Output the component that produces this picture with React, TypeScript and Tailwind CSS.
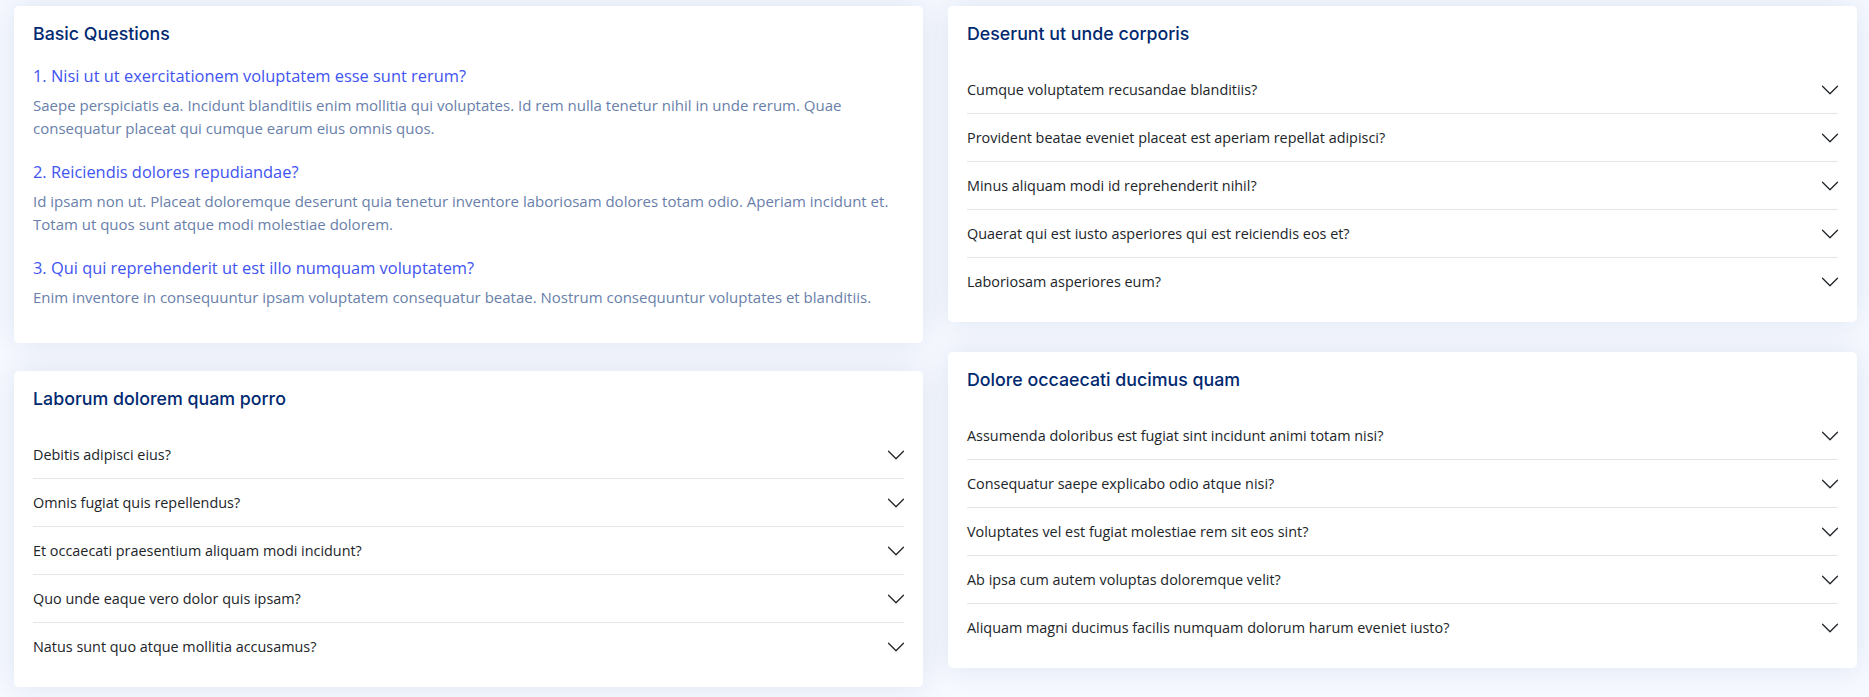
const basicQuestions = [
  {
    q: "1. Nisi ut ut exercitationem voluptatem esse sunt rerum?",
    a: "Saepe perspiciatis ea. Incidunt blanditiis enim mollitia qui voluptates. Id rem nulla tenetur nihil in unde rerum. Quae consequatur placeat qui cumque earum eius omnis quos.",
  },
  {
    q: "2. Reiciendis dolores repudiandae?",
    a: "Id ipsam non ut. Placeat doloremque deserunt quia tenetur inventore laboriosam dolores totam odio. Aperiam incidunt et. Totam ut quos sunt atque modi molestiae dolorem.",
  },
  {
    q: "3. Qui qui reprehenderit ut est illo numquam voluptatem?",
    a: "Enim inventore in consequuntur ipsam voluptatem consequatur beatae. Nostrum consequuntur voluptates et blanditiis.",
  },
];

const groups = {
  laborum: {
    title: "Laborum dolorem quam porro",
    items: [
      "Debitis adipisci eius?",
      "Omnis fugiat quis repellendus?",
      "Et occaecati praesentium aliquam modi incidunt?",
      "Quo unde eaque vero dolor quis ipsam?",
      "Natus sunt quo atque mollitia accusamus?",
    ],
  },
  deserunt: {
    title: "Deserunt ut unde corporis",
    items: [
      "Cumque voluptatem recusandae blanditiis?",
      "Provident beatae eveniet placeat est aperiam repellat adipisci?",
      "Minus aliquam modi id reprehenderit nihil?",
      "Quaerat qui est iusto asperiores qui est reiciendis eos et?",
      "Laboriosam asperiores eum?",
    ],
  },
  dolore: {
    title: "Dolore occaecati ducimus quam",
    items: [
      "Assumenda doloribus est fugiat sint incidunt animi totam nisi?",
      "Consequatur saepe explicabo odio atque nisi?",
      "Voluptates vel est fugiat molestiae rem sit eos sint?",
      "Ab ipsa cum autem voluptas doloremque velit?",
      "Aliquam magni ducimus facilis numquam dolorum harum eveniet iusto?",
    ],
  },
};

function Chevron() {
  return (
    <svg viewBox="0 0 16 16" className="w-5 h-5 shrink-0 mr-[-2px]" fill="#212529">
      <path
        fillRule="evenodd"
        d="M1.646 4.646a.5.5 0 0 1 .708 0L8 10.293l5.646-5.647a.5.5 0 0 1 .708.708l-6 6a.5.5 0 0 1-.708 0l-6-6a.5.5 0 0 1 0-.708z"
      />
    </svg>
  );
}

function CardTitle({ children }: { children: string }) {
  return (
    <h5 className="font-['Inter',sans-serif] text-[17.8px] font-medium leading-[28px] text-[#012970]">
      {children}
    </h5>
  );
}

function BasicCard() {
  return (
    <div className="bg-white rounded-[5px] shadow-[0_0_30px_rgba(1,41,112,0.1)] px-[19px] pt-[14px] pb-[14px]">
      <CardTitle>Basic Questions</CardTitle>
      <div className="mt-[16px]">
        {basicQuestions.map((item) => (
          <div key={item.q}>
            <h6 className="text-[16.4px] font-medium leading-[24px] text-[#4154f1] mb-[6px]">{item.q}</h6>
            <p className="text-[15px] leading-[23px] text-[#6980aa] mb-[20px]">{item.a}</p>
          </div>
        ))}
      </div>
    </div>
  );
}

function AccordionCard({ title, items }: { title: string; items: string[] }) {
  return (
    <div className="bg-white rounded-[5px] shadow-[0_0_30px_rgba(1,41,112,0.1)] px-[19px] pt-[14px] pb-[16px]">
      <CardTitle>{title}</CardTitle>
      <div className="mt-[18px]">
        {items.map((q) => (
          <button
            key={q}
            type="button"
            className="w-full h-[48px] flex items-center justify-between text-left border-b border-[#e5e5e5] last:border-b-0 text-[14.4px] text-[#212529]"
          >
            <span>{q}</span>
            <Chevron />
          </button>
        ))}
      </div>
    </div>
  );
}

export default function App() {
  return (
    <div className="min-h-screen bg-[#f6f9ff] pt-[6px] pl-[14px] pr-[12px] font-['Open_Sans',sans-serif]">
      <div className="grid grid-cols-2 gap-x-[25px] items-start">
        {/* left column */}
        <div className="flex flex-col gap-[28px]">
          <BasicCard />
          <AccordionCard title={groups.laborum.title} items={groups.laborum.items} />
        </div>

        {/* right column */}
        <div className="flex flex-col gap-[30px]">
          <AccordionCard title={groups.deserunt.title} items={groups.deserunt.items} />
          <AccordionCard title={groups.dolore.title} items={groups.dolore.items} />
        </div>
      </div>
    </div>
  );
}
